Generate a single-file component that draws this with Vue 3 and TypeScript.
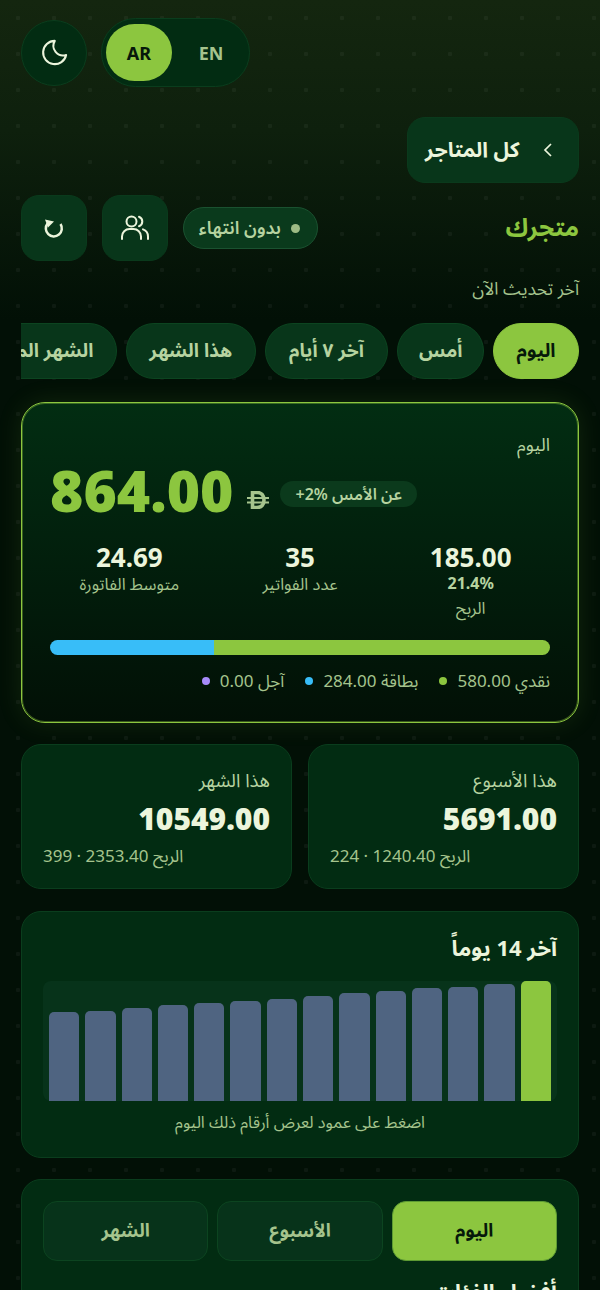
<script setup lang="ts">
import { ref } from 'vue'

const tabs = ['اليوم', 'أمس', 'آخر ٧ أيام', 'هذا الشهر', 'الشهر الماضي']
const ranges = ['اليوم', 'الأسبوع', 'الشهر']
const activeTab = ref(0)
const activeRange = ref(0)

// last entry is today
const bars = [89, 90, 93, 96, 98, 100, 102, 105, 108, 110, 113, 114, 117, 120]

const stats = [
  { value: '185.00', sub: '21.4%', label: 'الربح' },
  { value: '35', label: 'عدد الفواتير' },
  { value: '24.69', label: 'متوسط الفاتورة' },
]

const legend = [
  { text: 'نقدي 580.00', color: '#8cc63f' },
  { text: 'بطاقة 284.00', color: '#38bdf8' },
  { text: 'آجل 0.00', color: '#a78bfa' },
]

const periods = [
  { title: 'هذا الأسبوع', value: '5691.00', meta: 'الربح 1240.40 · 224' },
  { title: 'هذا الشهر', value: '10549.00', meta: 'الربح 2353.40 · 399' },
]
</script>

<template>
  <div class="page" dir="rtl">
    <div class="top-row">
      <div class="lang" dir="ltr">
        <button class="lang-btn on">AR</button>
        <button class="lang-btn">EN</button>
      </div>
      <button class="theme-btn">
        <svg width="31" height="31" viewBox="0 0 24 24" fill="none" stroke="currentColor" stroke-width="1.600" stroke-linejoin="round">
          <path d="M12.200 3a9 9 0 1 0 8.800 10.900A7.500 7.500 0 0 1 12.200 3z" />
        </svg>
      </button>
    </div>

    <div class="stores-row">
      <button class="stores-btn">
        <svg width="14" height="18" viewBox="0 0 14 18" fill="none" stroke="currentColor" stroke-width="1.700">
          <path d="M10 3 4 9l6 6" />
        </svg>
        <span>كل المتاجر</span>
      </button>
    </div>

    <div class="title-row">
      <h1>متجرك</h1>
      <div class="title-tools">
        <span class="plan"><i></i>بدون انتهاء</span>
        <button class="square-btn">
          <svg width="32" height="32" viewBox="0 0 32 32" fill="none" stroke="currentColor" stroke-width="2" stroke-linecap="round">
            <circle cx="12.500" cy="9.500" r="5" />
            <path d="M3 27v-2.500a7.500 7.500 0 0 1 7.500-7.500h4a7.500 7.500 0 0 1 7.500 7.500V27" />
            <path d="M20 4.800a5 5 0 0 1 0 9.400M24 17.400a7.500 7.500 0 0 1 5 7V27" />
          </svg>
        </button>
        <button class="square-btn">
          <svg width="20" height="20" viewBox="0 0 20 20" fill="none" stroke="currentColor" stroke-width="2.500">
            <path d="M16.500 6a8 8 0 1 1-13-.5" />
            <path d="M1 1.500 10 3.500 4 9.500z" fill="currentColor" stroke="none" />
          </svg>
        </button>
      </div>
    </div>

    <p class="updated">آخر تحديث الآن</p>

    <div class="tabs">
      <button
        v-for="(tab, i) in tabs"
        :key="tab"
        :class="['tab', { on: i === activeTab }]"
        @click="activeTab = i"
      >{{ tab }}</button>
    </div>

    <section class="hero">
      <div class="hero-label">اليوم</div>
      <div class="hero-main" dir="ltr">
        <span class="hero-value">864.00</span>
        <svg class="dirham" width="22" height="18" viewBox="0 0 22 18" fill="none" stroke="currentColor">
          <path d="M5.500 1.500h4.500c4.500 0 7 3 7 7.500s-2.500 7.500-7 7.500H5.500z" stroke-width="3.600" />
          <path d="M0 7h22M0 11.500h22" stroke-width="2" />
        </svg>
        <span class="delta" dir="rtl">عن الأمس <bdi dir="ltr">+2%</bdi></span>
      </div>
      <div class="hero-stats">
        <div v-for="s in stats" :key="s.label" class="stat">
          <b>{{ s.value }}</b>
          <em v-if="s.sub">{{ s.sub }}</em>
          <span>{{ s.label }}</span>
        </div>
      </div>
      <div class="split">
        <div class="split-cash"></div>
        <div class="split-card"></div>
      </div>
      <div class="legend">
        <span v-for="l in legend" :key="l.text" class="legend-item">
          {{ l.text }}<i :style="{ background: l.color }"></i>
        </span>
      </div>
    </section>

    <div class="period-grid">
      <section v-for="p in periods" :key="p.title" class="card period">
        <div class="period-title">{{ p.title }}</div>
        <div class="period-value">{{ p.value }}</div>
        <div class="period-meta">{{ p.meta }}</div>
      </section>
    </div>

    <section class="card chart-card">
      <h2>آخر 14 يوماً</h2>
      <div class="chart" dir="ltr">
        <div
          v-for="(h, i) in bars"
          :key="i"
          :class="['bar', { today: i === bars.length - 1 }]"
          :style="{ height: h + 'px' }"
        ></div>
      </div>
      <p class="chart-hint">اضغط على عمود لعرض أرقام ذلك اليوم</p>
    </section>

    <section class="card best-card">
      <div class="range-tabs">
        <button
          v-for="(r, i) in ranges"
          :key="r"
          :class="['range', { on: i === activeRange }]"
          @click="activeRange = i"
        >{{ r }}</button>
      </div>
      <h2>أفضل الفئات</h2>
    </section>
  </div>
</template>

<style>
html,
body {
  margin: 0;
  background: #020f06;
}
</style>

<style scoped>
.page {
  box-sizing: border-box;
  width: 600px;
  height: 1290px;
  overflow: hidden;
  padding: 18px 21px 0;
  font-family: "Noto Sans", "Noto Sans Arabic", "DejaVu Sans", sans-serif;
  color: #ecf5dc;
  background-color: #020f06;
  background-image:
    radial-gradient(circle at center, rgba(255, 255, 255, 0.045) 2px, transparent 2.500px),
    linear-gradient(180deg, #14260f 0%, #0e200d 130px, #021006 320px, #021006 100%);
  background-size: 36px 36px, 100% 100%;
}

button {
  font: inherit;
  color: inherit;
  cursor: pointer;
}

.top-row {
  display: flex;
  align-items: center;
  justify-content: flex-end;
  gap: 14px;
}

.theme-btn {
  display: flex;
  align-items: center;
  justify-content: center;
  width: 66px;
  height: 66px;
  padding: 0;
  border: 1px solid #0a3d1d;
  border-radius: 50%;
  background: #022c12;
}

.lang {
  display: flex;
  align-items: center;
  gap: 6px;
  box-sizing: border-box;
  width: 149px;
  height: 69px;
  padding: 4px;
  border: 1px solid #0a3d1d;
  border-radius: 35px;
  background: #022c12;
}

.lang-btn {
  width: 66px;
  height: 57px;
  padding: 0;
  border: 0;
  border-radius: 29px;
  background: transparent;
  font-size: 18px;
  font-weight: 700;
  color: #a5c48d;
}

.lang-btn.on {
  background: #8cc63f;
  color: #06180a;
}

.stores-row {
  display: flex;
  margin-top: 30px;
}

.stores-btn {
  display: flex;
  align-items: center;
  justify-content: space-between;
  box-sizing: border-box;
  width: 172px;
  height: 66px;
  padding: 0 23px 0 17px;
  border: 1px solid #0a3a1c;
  border-radius: 18px;
  background: #08361a;
  font-size: 21px;
  font-weight: 700;
}

.title-row {
  display: flex;
  align-items: center;
  justify-content: space-between;
  margin-top: 12px;
}

h1 {
  margin: 0;
  font-size: 24.500px;
  font-weight: 700;
  color: #8cc63f;
}

.title-tools {
  display: flex;
  align-items: center;
  gap: 15px;
}

.plan {
  display: flex;
  align-items: center;
  gap: 10px;
  box-sizing: border-box;
  width: 135px;
  height: 42px;
  padding: 0 17px;
  border: 1px solid #1a5230;
  border-radius: 21px;
  background: #0a3a1c;
  font-size: 18px;
  font-weight: 600;
  white-space: nowrap;
  color: #b6d3a0;
}

.plan i {
  flex: none;
  width: 9px;
  height: 9px;
  border-radius: 50%;
  background: #9dbb85;
}

.square-btn {
  display: flex;
  align-items: center;
  justify-content: center;
  width: 66px;
  height: 66px;
  padding: 0;
  border: 1px solid #0a3a1c;
  border-radius: 18px;
  background: #08361a;
}

.updated {
  margin: 16px 0 0;
  font-size: 17.500px;
  line-height: 22px;
  color: #a5c48d;
}

.tabs {
  display: flex;
  gap: 9px;
  margin-top: 24px;
  overflow: hidden;
}

.tab {
  flex: none;
  height: 56px;
  padding: 0 22.500px;
  border: 1px solid #0c4420;
  border-radius: 28px;
  background: #08361a;
  font-size: 19px;
  font-weight: 700;
  white-space: nowrap;
  color: #b6d3a0;
}

.tab:nth-child(2) {
  padding: 0 20.500px;
}

.tab:nth-child(3) {
  padding: 0 23.500px;
}

.tab.on {
  background: #8cc63f;
  border-color: #8cc63f;
  color: #06180a;
}

.hero {
  box-sizing: border-box;
  height: 321px;
  margin-top: 23px;
  padding: 30px 28px 0;
  border: 1px solid #8cc63f;
  border-radius: 24px;
  background: linear-gradient(180deg, #022d12 0%, #021006 100%);
  box-shadow: 0 0 26px rgba(140, 198, 63, 0.12), inset 0 0 0 1px rgba(140, 198, 63, 0.4);
}

.hero-label {
  margin-top: -1px;
  font-size: 18px;
  line-height: 24px;
  color: #b6d3a0;
}

.hero-main {
  display: flex;
  align-items: center;
}

.hero-value {
  font-size: 57px;
  line-height: 68px;
  font-weight: 900;
  color: #8cc63f;
}

.dirham {
  margin: 20px 0 0 14px;
  color: #a5c48d;
}

.delta {
  margin: 8px 0 0 11px;
  padding: 0 15px;
  height: 26px;
  line-height: 26px;
  border-radius: 13px;
  background: #0b3a1c;
  font-size: 16px;
  font-weight: 600;
  white-space: nowrap;
  color: #b6d3a0;
}

.hero-stats {
  display: grid;
  grid-template-columns: repeat(3, 1fr);
  gap: 12px;
  margin-top: 17px;
  text-align: center;
}

.stat {
  display: flex;
  flex-direction: column;
  align-items: center;
}

.stat b {
  font-size: 26px;
  line-height: 32px;
  font-weight: 700;
}

.stat em {
  font-size: 16px;
  line-height: 20px;
  font-style: normal;
  font-weight: 700;
  color: #b6d3a0;
}

.stat span {
  font-size: 16.500px;
  line-height: 22px;
  color: #a5c48d;
}

.stat em + span {
  margin-top: 4px;
}

.split {
  display: flex;
  height: 15px;
  margin-top: 21px;
  border-radius: 8px;
  overflow: hidden;
}

.split-cash {
  flex: 580;
  background: #8cc63f;
}

.split-card {
  flex: 284;
  background: #38bdf8;
}

.legend {
  display: flex;
  gap: 21px;
  margin-top: 14px;
  font-size: 17px;
  line-height: 24px;
  color: #a5c48d;
}

.legend-item {
  display: flex;
  align-items: center;
  gap: 10px;
}

.legend-item i {
  width: 8px;
  height: 8px;
  border-radius: 50%;
}

.card {
  box-sizing: border-box;
  border: 1px solid #0a3d1d;
  border-radius: 20px;
  background: #022c12;
}

.period-grid {
  display: grid;
  grid-template-columns: 1fr 1fr;
  gap: 16px;
  margin-top: 21px;
}

.period {
  height: 145px;
  padding: 22px 21px 0;
}

.period-title {
  font-size: 18.500px;
  line-height: 26px;
  color: #b6d3a0;
}

.period-value {
  margin-top: 6px;
  font-size: 30px;
  line-height: 40px;
  font-weight: 900;
}

.period-meta {
  margin-top: 5px;
  font-size: 17px;
  line-height: 24px;
  text-align: left;
  color: #a5c48d;
}

.chart-card {
  height: 247px;
  margin-top: 22px;
  padding: 21px 21px 0;
}

h2 {
  margin: 0;
  font-size: 22px;
  line-height: 28px;
  font-weight: 700;
}

.chart {
  display: flex;
  align-items: flex-end;
  gap: 6px;
  box-sizing: border-box;
  height: 120px;
  margin-top: 20px;
  padding: 0 6px;
  border-radius: 8px;
  background: #07331a;
}

.bar {
  flex: 1;
  border-radius: 5px 5px 0 0;
  background: #4f6481;
}

.bar.today {
  background: #8cc63f;
}

.chart-hint {
  margin: 9px 0 0;
  text-align: center;
  font-size: 16.300px;
  line-height: 24px;
  color: #a5c48d;
}

.best-card {
  height: 200px;
  margin-top: 21px;
  padding: 21px 21px 0;
}

.range-tabs {
  display: grid;
  grid-template-columns: repeat(3, 1fr);
  gap: 9px;
}

.range {
  height: 60px;
  padding: 0;
  border: 1px solid #0c4420;
  border-radius: 14px;
  background: #07331a;
  font-size: 18.500px;
  font-weight: 700;
  color: #a5c48d;
}

.range.on {
  background: #8cc63f;
  border-color: #5d9a33;
  color: #06180a;
}

.best-card h2 {
  margin-top: 16px;
}
</style>
